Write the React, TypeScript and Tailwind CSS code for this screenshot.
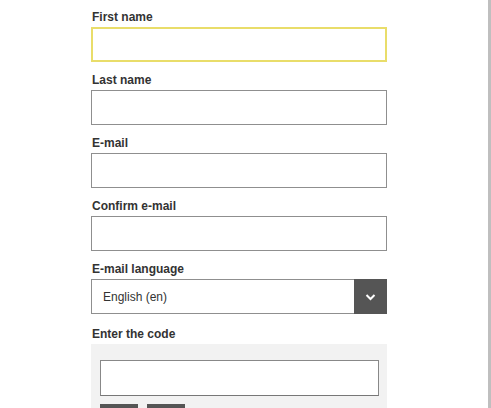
import { useState } from "react";

const fields = [
  { id: "first", label: "First name", focus: true },
  { id: "last", label: "Last name" },
  { id: "email", label: "E-mail" },
  { id: "confirm", label: "Confirm e-mail" },
];

function Label({ children }: { children: React.ReactNode }) {
  return (
    <label className="mb-[2px] block pl-px text-[12px] font-bold leading-[15px] text-[#333]">
      {children}
    </label>
  );
}

export default function App() {
  const [lang, setLang] = useState("en");

  return (
    <div className="flex h-[408px] overflow-hidden bg-white font-['Liberation_Sans',Arial,sans-serif]">
      <div className="flex-1 pl-[91px] pt-[10px]">
        <form className="w-[296px]">
          {fields.map((f) => (
            <div key={f.id} className="mb-[11px]">
              <Label>{f.label}</Label>
              <input
                type="text"
                className={`block h-[35px] w-full bg-white px-2 text-[12px] outline-none ${
                  f.focus
                    ? "border-2 border-[#e9dd6a]"
                    : "border border-[#8f8f8f]"
                }`}
              />
            </div>
          ))}

          <div className="mb-[13px]">
            <Label>E-mail language</Label>
            <div className="flex h-[35px] w-full border border-[#8f8f8f] bg-white">
              <select
                value={lang}
                onChange={(e) => setLang(e.target.value)}
                className="flex-1 appearance-none bg-transparent pl-[11px] text-[12px] text-[#333] outline-none"
              >
                <option value="en">English (en)</option>
                <option value="fr">Français (fr)</option>
              </select>
              <div className="-my-px -mr-px flex w-[33px] items-center justify-center bg-[#555]">
                <svg width="11" height="8" viewBox="0 0 11 8" fill="none">
                  <path d="M1.5 2 5.5 6 9.5 2" stroke="#fff" strokeWidth="2" />
                </svg>
              </div>
            </div>
          </div>

          <div>
            <Label>Enter the code</Label>
            <div className="bg-[#f2f2f2] pl-[9px] pr-[8px] pt-[16px] pb-3">
              <input
                type="text"
                className="block h-[36px] w-full border border-[#888] border-b-[#777] bg-white px-2 text-[12px] outline-none"
              />
              <div className="mt-[8px] flex gap-[9px]">
                <button type="button" className="h-[28px] w-[38px] bg-[#555]" />
                <button type="button" className="h-[28px] w-[38px] bg-[#555]" />
              </div>
            </div>
          </div>
        </form>
      </div>
      <div className="w-[3px] bg-[#bfbfbf]" />
    </div>
  );
}
